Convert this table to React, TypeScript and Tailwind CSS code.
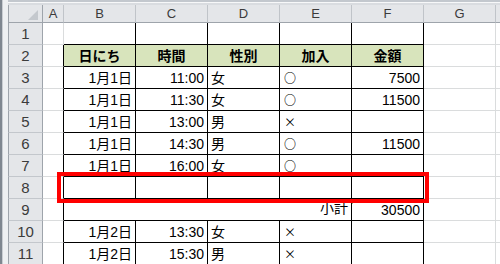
import React from "react";

type Align = "left" | "right" | "center";

const cols = ["A", "B", "C", "D", "E", "F", "G", "H"];
const colW: Record<string, string> = {
  A: "w-[21px]",
  B: "w-[72px]",
  C: "w-[72px]",
  D: "w-[72px]",
  E: "w-[72px]",
  F: "w-[72px]",
  G: "w-[72px]",
  H: "w-[20px]",
};

// table body B..F per row (rows 3..11)
const data: Record<number, string[]> = {
  3: ["1月1日", "11:00", "女", "○", "7500"],
  4: ["1月1日", "11:30", "女", "○", "11500"],
  5: ["1月1日", "13:00", "男", "×", ""],
  6: ["1月1日", "14:30", "男", "○", "11500"],
  7: ["1月1日", "16:00", "女", "○", ""],
  8: ["", "", "", "", ""],
  10: ["1月2日", "13:30", "女", "×", ""],
  11: ["1月2日", "15:30", "男", "×", ""],
};
const heads = ["日にち", "時間", "性別", "加入", "金額"];
const aligns: Align[] = ["right", "right", "left", "left", "right"];

const inTable = (c: string) => ["B", "C", "D", "E", "F"].includes(c);

function Mark({ text }: { text: string }) {
  if (text === "○")
    return <span className="pl-[1px] font-[Noto_Sans_CJK_JP,sans-serif] text-[12px] font-bold">○</span>;
  if (text === "×")
    return <span className="pl-[1px] font-[Noto_Sans_CJK_JP,sans-serif] text-[12px]">×</span>;
  return <>{text}</>;
}

function Cell({
  col,
  row,
  text,
  align = "left",
  bold,
  green,
  children,
}: {
  col: string;
  row: number;
  text?: string;
  align?: Align;
  bold?: boolean;
  green?: boolean;
  children?: React.ReactNode;
}) {
  const blackRight = inTable(col) || (col === "A" && row >= 2);
  const blackBottom = inTable(col) && row >= 1;
  return (
    <div
      className={[
        "relative flex h-full shrink-0 items-center overflow-hidden whitespace-nowrap border-r border-b px-[3px] leading-none",
        colW[col],
        blackRight ? "border-r-black" : "border-r-[#dadcdd]",
        blackBottom ? "border-b-black" : "border-b-[#dadcdd]",
        align === "right" ? "justify-end" : align === "center" ? "justify-center" : "justify-start",
        bold ? "font-bold" : "",
        green ? "bg-[#d8e4bc]" : "",
      ].join(" ")}
    >
      {text ? <Mark text={text} /> : null}
      {children}
    </div>
  );
}

function RowHead({ n }: { n: number }) {
  return (
    <div className="flex h-full w-[35px] shrink-0 items-center justify-center border-x border-b border-x-[#9ea4ab] border-b-[#c3c7cc] bg-[#e4e6e9] pt-[2px] font-[Liberation_Sans,sans-serif] text-[15px] text-[#3b3b3b]">
      {n}
    </div>
  );
}

function Row({ n }: { n: number }) {
  let cells: React.ReactNode;
  if (n === 1) {
    cells = cols.map((c) => <Cell key={c} col={c} row={n} />);
  } else if (n === 2) {
    cells = cols.map((c, i) =>
      inTable(c) ? (
        <Cell key={c} col={c} row={n} text={heads[i - 1]} align="center" bold green />
      ) : (
        <Cell key={c} col={c} row={n} />
      )
    );
  } else if (n === 9) {
    cells = (
      <>
        <Cell col="A" row={n} />
        <div className="flex h-full w-[288px] shrink-0 items-center justify-end border-r border-b border-black px-[3px] pb-[3px] leading-none">
          小計
        </div>
        <Cell col="F" row={n} text="30500" align="right">
          <div className="absolute top-0 left-0 h-0 w-0 border-t-[5px] border-r-[5px] border-t-[#1f8a1f] border-r-transparent" />
        </Cell>
        <Cell col="G" row={n} />
        <Cell col="H" row={n} />
      </>
    );
  } else {
    cells = cols.map((c, i) =>
      inTable(c) ? (
        <Cell key={c} col={c} row={n} text={data[n][i - 1]} align={aligns[i - 1]} />
      ) : (
        <Cell key={c} col={c} row={n} />
      )
    );
  }
  return (
    <div className="flex h-[22px] shrink-0">
      <RowHead n={n} />
      {cells}
    </div>
  );
}

export default function App() {
  const rowNums = [1, 2, 3, 4, 5, 6, 7, 8, 9, 10, 11];
  return (
    <div className="relative flex h-[264px] w-[500px] overflow-hidden bg-white font-[Liberation_Sans,Noto_Sans_CJK_JP,sans-serif] text-[14px] text-black">
      {/* left frame edge */}
      <div className="flex h-full w-[8px] shrink-0">
        <div className="h-full w-[2px] bg-[#7f8790]" />
        <div className="h-full w-[1px] bg-[#c9cdd2]" />
        <div className="h-full w-[5px] bg-[#eef0f2]" />
      </div>

      <div className="flex min-w-0 flex-1 flex-col">
        {/* top strip */}
        <div className="flex h-[5px] shrink-0 flex-col">
          <div className="h-[2px] bg-[#c3c8ce]" />
          <div className="h-[1px] bg-[#f7f8f9]" />
          <div className="h-[2px] bg-[#d9dce0]" />
        </div>

        {/* column headers */}
        <div className="flex h-[18px] shrink-0 bg-[#e4e6e9] font-[Liberation_Sans,sans-serif] text-[13px] text-[#3b3b3b]">
          <div className="relative h-full w-[35px] shrink-0 border-x border-b border-x-[#9ea4ab] border-b-[#9ea4ab]">
            <svg className="absolute top-[5px] right-[4px]" width="10" height="10" viewBox="0 0 10 10">
              <polygon points="10,0 10,10 0,10" fill="#c4c8cd" />
            </svg>
          </div>
          {cols.map((c) => (
            <div
              key={c}
              className={`flex h-full shrink-0 items-center justify-center border-r border-b border-r-[#c0c4c9] border-b-[#9ea4ab] pt-[1px] ${colW[c]}`}
            >
              {c === "H" ? "" : c}
            </div>
          ))}
        </div>

        {rowNums.map((n) => (
          <Row key={n} n={n} />
        ))}
      </div>

      {/* red highlight box */}
      <div className="absolute top-[172px] left-[57px] h-[31px] w-[372px] border-[4px] border-[#ff0000]" />
    </div>
  );
}
